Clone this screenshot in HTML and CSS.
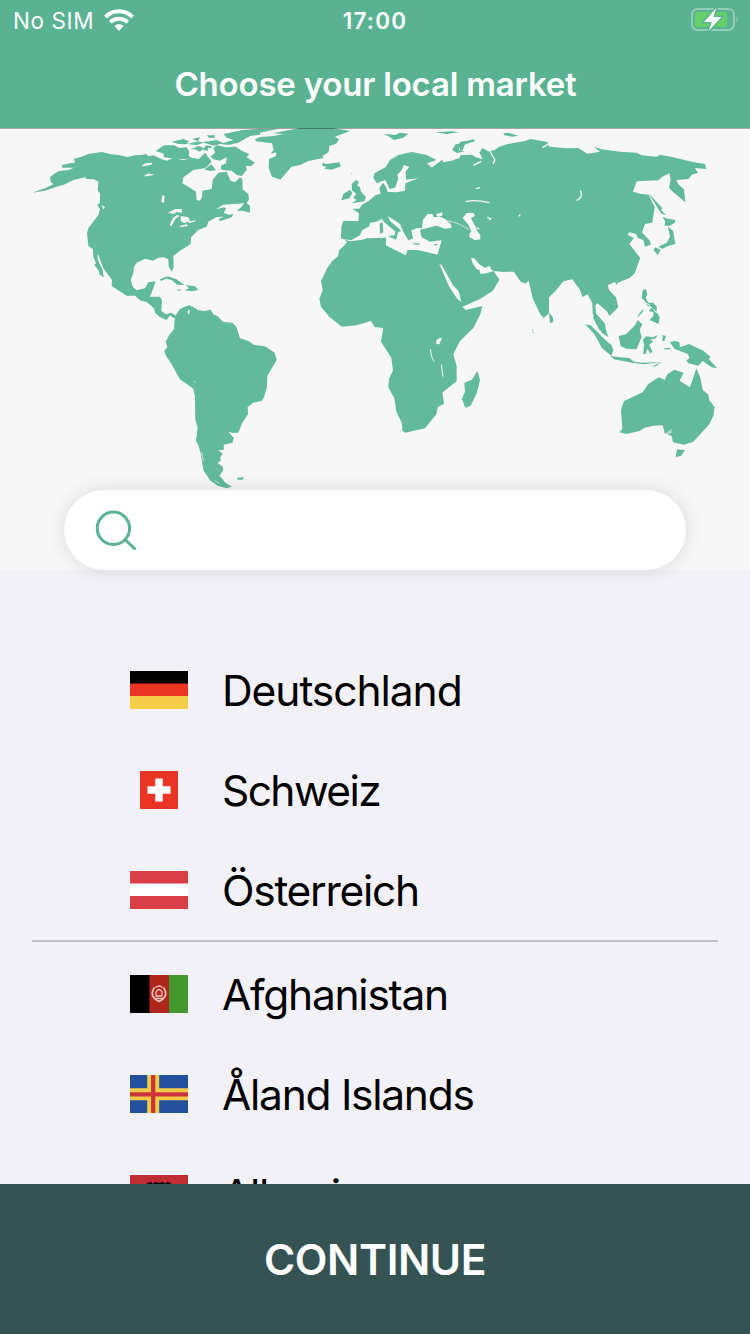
FILE: index.html
```html
<!DOCTYPE html>
<html lang="en">
<head>
<meta charset="utf-8">
<title>Choose your local market</title>
<link rel="stylesheet" href="styles.css">
</head>
<body>
<div class="screen">
  <header class="header">
    <div class="status">
      <div class="carrier"><span>No SIM</span>
        <svg class="wifi" viewBox="0 0 30 22" fill="none" stroke="#fff"><path stroke-width="4" d="M1.500 8.100C9 .4 21 .4 28.500 8.100"/><path stroke-width="4" d="M6.300 13.200C11 8.500 19 8.500 23.700 13.200"/><path fill="#fff" stroke="none" d="M10.300 17C12.800 14.600 17.200 14.600 19.700 17L15 22Z"/></svg>
      </div>
      <time class="clock">17:00</time>
      <svg class="battery" viewBox="0 0 50 26"><rect x="2" y="2" width="42" height="21" rx="5.500" fill="none" stroke="#94cdb7" stroke-width="2"/><rect x="5" y="5" width="32" height="15" rx="2.500" fill="#65d067"/><path d="M46.500 9q2.500 3.500 0 7z" fill="#94cdb7"/><path d="M26.200 1L14 15h7.800l-3 8.800L31.500 10h-8z" fill="#fff" stroke="#59b292" stroke-width="3" paint-order="stroke"/></svg>
    </div>
    <h1 class="title">Choose your local market</h1>
  </header>

  <section class="hero">
    <svg class="map" viewBox="0 128 750 442" fill="#62ba9d">
      <!-- North America -->
      <g transform="translate(20 120) scale(.33333)">
        <path d="M37 218L75 205L100 193L92 185L90 172L105 160L118 153L145 150L162 143L128 143L124 136L150 130L165 128L162 116L185 110L205 102L245 96L270 102L300 106L322 111L345 106L365 105L378 102L385 109L400 106L425 118L440 122L460 114L490 120L520 114L537 117L555 98L575 125L560 140L553 145L520 150L490 172L487 190L505 200L528 215L530 240L540 242L546 232L547 212L575 207L578 180L595 158L620 155L632 183L645 187L660 172L667 178L668 208L685 222L687 238L680 250L690 258L690 278L668 272L650 272L665 260L672 250L640 252L610 254L588 268L612 262L618 265L612 278L625 284L640 282L635 292L600 304L597 296L612 290L590 291L565 305L560 320L535 330L513 352L512 372L480 392L460 408L461 440L456 455L446 440L445 418L430 412L415 413L400 422L375 416L350 428L342 440L340 460L332 480L338 500L350 511L375 505L385 487L407 484L400 505L390 530L420 530L426 540L424 573L438 583L452 578L466 585L460 594L450 586L440 600L420 592L405 578L402 565L380 546L362 542L345 527L320 527L275 498L276 480L250 445L235 405L232 403L234 420L248 450L251 472L240 465L235 450L223 435L228 430L220 410L219 388L205 377L201 340L205 325L235 285L240 268L232 255L240 248L240 220L233 212L235 185L222 178L200 177L195 172L160 180L130 195L110 200L75 212Z"/>
        <path d="M407 93L432 76L463 76L478 84L500 82L508 95L506 108L520 116L490 117L460 116L430 111L432 101ZM455 65L490 57L507 64L500 73L475 72ZM517 57L540 51L533 64ZM561 46L586 46L582 54L566 53ZM502 72L535 64L550 68L530 76ZM546 67L590 60L610 69L582 77ZM611 42L650 34L720 27V44L690 48L655 68L625 75L600 72L640 60L618 52ZM512 88L535 78L552 84L540 95L525 88ZM558 76L575 79L568 105L580 118L600 122L620 112L618 130L600 138L606 150L635 152L650 165L665 168L680 150L678 137L692 139L705 128L680 112L688 102L665 92L648 80L620 82L590 76L570 94L548 90ZM553 148L574 133L588 151L570 153ZM420 478L443 469L470 478L493 495L472 494L455 480L438 476L423 483ZM498 495L525 499L535 509L518 514L493 511L507 505ZM470 508L484 509L478 514ZM478 570L490 562L510 555L516 562L530 566V570Z"/>
        <path fill="#f7f7f7" d="M365 137L378 129L398 128L394 134L370 139ZM370 169L385 160L404 164L380 169ZM427 225L434 228L432 248L424 246ZM444 278L466 267L485 267L487 278L470 276L460 282ZM455 318L449 316L458 295L470 286L480 287L466 296ZM482 288L505 292L510 302L492 310L482 302ZM477 319L500 313L505 318L483 321ZM502 305L528 301L524 305L508 309ZM565 83L582 88L585 98L568 113L562 98ZM588 127L606 126L602 145L584 141ZM244 254L255 262L250 268Z"/>
      </g>
      <!-- South America -->
      <g transform="translate(140 270) scale(.33333)">
        <path d="M75 140L92 128L106 137L120 117L142 110L150 105L146 117L157 109L170 119L193 123L212 119L220 133L233 139L250 156L277 158L289 170L300 205L325 213L343 225L375 229L404 248L410 269L400 287L382 317L381 350L372 382L365 393L340 398L323 411L324 433L307 458L295 488L278 489L265 485L281 503L278 518L251 524L252 539L235 541L248 552L241 562L242 572L233 579L248 590L250 599L239 617L256 638L276 650L260 655L233 647L210 631L190 600L183 555L175 525L168 512L173 472L166 450L165 380L160 356L120 328L92 278L77 256L73 242L82 232L77 215L88 194L102 178L104 145L92 133L80 141ZM291 623L312 622L308 629L294 629Z"/>
        <path fill="#f7f7f7" d="M144 121h5l-1 12-5-4zM163 331l5 7-4-1z"/>
        <path fill="none" stroke="#f7f7f7" stroke-width="2" d="M185 545l5 28M225 632l13 8"/>
      </g>
      <!-- Greenland, Iceland and Europe -->
      <g transform="translate(240 120) scale(.33333)">
        <path d="M45 58L60 51L100 48L130 42L98 40L180 24H280L330 33L285 50L297 58L288 71L268 78L266 97L247 108L250 114L205 123L180 135L155 140L135 163L121 179L96 170L86 145L87 117L108 108L109 97L92 101L101 89L96 70L48 64ZM0 31L58 26H118L55 39L0 55ZM247 128L258 132L298 127L303 139L275 149L252 146L260 140L247 138ZM431 41L465 45L480 38L505 41L490 53L462 60L448 50ZM585 37L635 34L657 37L620 42ZM637 91L645 74L700 58L705 64L662 77L656 91L675 94L652 99ZM334 158L337 159L336 164ZM335 192L348 180L356 184L352 198L360 201L363 215L378 231L373 244L334 250L350 240L340 233L349 222L336 211ZM310 222L330 209L337 219L328 235L304 241Z"/>
        <path fill-rule="evenodd" d="M303 355L304 320L310 302L355 304L357 280L337 266L358 266L366 254L386 243L407 225L422 221L418 204L430 188L438 200L443 216L470 217L495 212L496 190L535 175L498 179L497 154L508 141L492 135L485 151L472 164L475 177L465 203L449 207L436 180L410 190L400 173L404 159L437 142L450 120L475 105L515 96L560 105L590 120L570 127L561 130L575 143L607 119L610 127L635 122L680 106L720 115V450H259L276 424L294 409L298 389L323 371L315 358L333 361L360 346L366 331L388 319L390 308L410 305L425 297L433 307L467 335L463 346L443 348L468 359L474 338L483 331L450 303L444 288L480 312L490 335L505 361L519 355L514 331L532 324L556 325L540 330L545 352L570 365L605 361L595 405L575 400L533 390L504 390L498 408L470 398L437 376L438 353L380 355L345 370L320 361Z"/>
        <path d="M419 310l9-3 2 30-10 5zM518 369l20 1 1 4-18-1zM581 373l14-2-9 7z"/>
      </g>
      <!-- Africa and Arabia -->
      <g transform="translate(310 230) scale(.33333)">
        <path d="M112 36L125 33L170 28L228 23L226 46L288 76L293 59L382 75L395 32H630V140L611 124L580 126L551 123L568 149L549 182L510 207L468 226L457 230L467 240L517 228L511 253L490 294L450 333L430 372L440 408L440 453L397 488L402 521L383 532L379 553L345 595L286 608L277 602L276 580L259 545L253 505L235 472L237 446L249 421L244 383L213 335L220 294L194 291L183 273L140 286L95 290L58 260L33 230L28 207L38 180L33 153L55 109L86 87L90 61ZM502 422L510 451L500 490L482 527L466 533L456 507L465 485L463 459L487 448Z"/>
        <path fill="#f7f7f7" d="M388 102L395 105L430 167L446 184L454 216L442 207L418 171ZM380 330L390 323L396 325L388 343L378 342Z"/>
        <path fill="none" stroke="#f7f7f7" stroke-width="3" d="M361 357Q362 380 372 394M394 404L399 440"/>
      </g>
      <!-- Asia -->
      <g transform="translate(460 120) scale(.33333)">
        <path d="M0 106L35 104L58 118L68 116L58 98L67 84L85 94L105 90L115 82L140 73L195 63L212 57L262 66L268 80L320 85L355 84L382 101L420 95L402 80L425 88L480 95L530 98L545 106L590 110L600 104L640 112L695 125L735 132L739 147L705 144L714 158L695 164L686 177L649 180L655 193L672 208L676 247L635 212L627 203L632 178L628 160L607 170L595 181L530 184L519 215L545 222L566 224L584 262L577 308L555 312L546 337L570 363L572 374L555 380L550 360L534 354L528 342L508 337L495 352L483 345L503 328L500 342L521 354L508 372L541 414L524 460L510 473L474 488L470 495L464 485L443 496L447 510L468 532L475 562L448 588L442 575L413 550L406 555L408 580L435 611L437 630H418L398 580L397 550L383 523L367 531L360 509L337 478L310 484L289 510L267 532L267 580L251 594L240 581L218 535L206 482L196 491L182 485L162 455L95 451L0 440Z"/>
        <path d="M0 65L45 59L40 63L15 72L8 91L0 92ZM130 40L145 38L175 47L157 50L133 46ZM566 221L581 236L607 264L603 269L618 286L603 280ZM608 290L623 296L645 300L645 308L629 317L613 317L616 305ZM624 320L639 332L646 372L624 378L608 386L595 380L620 368L630 350ZM585 382L602 389L593 406L581 390ZM267 578L278 590L280 606L270 610ZM217 626l3 4h-3z"/>
        <g fill="none" stroke="#f7f7f7" stroke-width="4"><path d="M84 84L105 120L99 131M361 212Q371 231 350 242M17 245Q43 238 88 248M40 136L64 124M82 292L92 296L88 300M48 206l12-3M247 83l20-12M50 323l8 4M176 289l5-6"/></g>
      </g>
      <!-- Inland seas and gulfs -->
      <g fill="#f7f7f7">
        <path transform="translate(460 120) scale(.33333)" d="M8 294L20 279L40 278L45 288L33 294L40 308L47 321L53 335L61 345V358L45 361L29 352L28 342L34 334L26 316Z"/>
        <path transform="translate(310 230) scale(.33333)" d="M483 85L492 84L508 103L525 113L540 108L543 118L551 123L530 130L512 132L508 120L500 118L488 100Z"/>
        <path transform="translate(240 120) scale(.33333)" d="M546 322L549 300L562 283L577 281L582 292L600 290L616 297L632 311L635 323L615 326L590 317L565 323L550 327ZM588 282L608 277L606 287L593 290Z"/>
        <path transform="translate(240 120) scale(.33333)" fill="none" stroke="#f7f7f7" stroke-width="2" d="M625 302L655 311L688 329"/>
      </g>
      <!-- South-east Asia and Oceania -->
      <g transform="translate(520 270) scale(.33333)">
        <path d="M196 163L212 166L240 194L267 220L274 224L280 240L274 258L245 233L225 195ZM218 140L230 138L252 160L265 202L247 190L230 165ZM271 258L300 262L328 264L342 275L368 278L424 276L400 280L370 283L340 279L282 268ZM395 290L424 276L408 289ZM296 198L318 193L346 164L352 150L367 163L359 180L365 200L350 238L320 236L302 229ZM368 60L378 57L382 73L377 84L385 98L400 98L411 111L409 124L419 141L416 162L389 150L400 138L400 126L386 123L397 112L382 107L375 93L365 84ZM353 137L369 117L368 127L354 141ZM378 199L398 202L412 196L409 203L388 211L401 213L388 224L397 244L392 252L382 236L376 253L370 252L372 224L369 210ZM428 195L438 198L433 214L427 212ZM431 235L450 233L449 238L432 238ZM449 216L466 213L478 217L480 232L507 222L550 242L572 261L566 267L592 295L575 292L548 273L535 287L505 280L499 272L508 264L504 252L464 237ZM298 487L307 476L303 419L312 393L344 378L368 367L385 342L416 322L434 329L443 312L463 299L491 308L479 332L510 352L522 317L529 295L541 323L548 359L565 374L568 391L584 412L580 437L568 462L542 491L520 515L492 524L459 517L455 498L434 490L428 466L400 467L374 473L358 483L320 492ZM471 538L495 541L483 558L467 561ZM36 177l6 12-3-1z"/>
        <path fill="none" stroke="#f7f7f7" stroke-width="3" d="M377 99l14 7M400 117l10 12M437 493l17-14M445 492l10-7"/>
      </g>
    </svg>
    <label class="search">
      <svg class="lens" viewBox="0 0 42 42" fill="none" stroke="#59b292" stroke-width="3"><circle cx="18.400" cy="18.300" r="16.200"/><path d="M30 29.500L40.500 39.500"/></svg>
      <input class="query" type="text" aria-label="Search">
    </label>
  </section>

  <main class="markets">
    <div class="group">
      <div class="row"><svg class="flag" viewBox="0 0 58 38"><path d="M0 0h58v13H0z"/><path fill="#ea3424" d="M0 12.500h58V25H0z"/><path fill="#f6cd46" d="M0 25h58v13H0z"/></svg><span class="name">Deutschland</span></div>
      <div class="row"><svg class="flag" viewBox="0 0 58 38"><path fill="#ea3424" d="M10 0h38v38H10z"/><path fill="#fff" d="M25.300 7.500h7.400v7.800h7.800v7.400h-7.800v7.800h-7.400v-7.800h-7.800v-7.400h7.800z"/></svg><span class="name name-tight">Schweiz</span></div>
      <div class="row"><svg class="flag" viewBox="0 0 58 38"><path fill="#d93f44" d="M0 0h58v38H0z"/><path fill="#fff" d="M0 12.500h58V25H0z"/></svg><span class="name name-snug">Österreich</span></div>
    </div>
    <div class="group">
      <div class="row"><svg class="flag" viewBox="0 0 58 38"><path d="M0 0h20v38H0z"/><path fill="#b1261c" d="M19.500 0H39v38H19.500z"/><path fill="#43972d" d="M39 0h19v38H39z"/><g fill="none" stroke="#e9c5bf"><path stroke-width="1.700" d="M24.500 12.500q-6 9 4.500 14 10.500-5 4.500-14"/><path stroke-width="1.300" d="M25.500 12.500q3.500-3 7 0M26 21h6v-4q-3-5-6 0zM25 23.500h8"/></g></svg><span class="name name-snug">Afghanistan</span></div>
      <div class="row"><svg class="flag" viewBox="0 0 58 38"><path fill="#22509d" d="M0 0h58v38H0z"/><path stroke="#f4cc48" stroke-width="12" d="M23.200 0v38M0 19.300h58"/><path stroke="#cb3439" stroke-width="4.200" d="M23.200 0v38M0 19.300h58"/></svg><span class="name name-snug">Åland Islands</span></div>
      <div class="row"><svg class="flag" viewBox="0 0 58 38"><path fill="#c02d32" d="M0 0h58v38H0z"/><path d="M17 8l4-1 2 2 2-2 4 1 4-1 2 2 2-2 4 1-5 7 2 5-6 8-3 6-3-6-6-8 2-5z"/></svg><span class="name name-snug">Albania</span></div>
    </div>
  </main>

  <button class="continue" type="button"><span>CONTINUE</span></button>
</div>
</body>
</html>
```
FILE: styles.css
```css
* { box-sizing: border-box; }
body { margin: 0; font-family: Inter, "Liberation Sans", sans-serif; }
.screen { width: 750px; height: 1334px; display: flex; flex-direction: column; overflow: hidden; background: #f2f1f7; }
.header { position: relative; z-index: 1; height: 128px; flex: none; background: #59b292; color: #fff; box-shadow: 0 1px 0 rgba(0, 0, 0, .33); }
.status { height: 40px; display: grid; grid-template-columns: 1fr auto 1fr; align-items: center; padding: 0 10px 0 13px; }
.carrier { display: flex; align-items: center; gap: 10px; font-size: 22.500px; letter-spacing: .6px; }
.wifi { width: 30px; height: 22px; }
.clock { font-size: 22.500px; font-weight: 600; letter-spacing: 1.200px; margin-right: 3px; }
.battery { width: 50px; height: 26px; justify-self: end; }
.title { margin: 0; height: 88px; padding-left: 1px; display: flex; align-items: center; justify-content: center; font-size: 33px; font-weight: 600; letter-spacing: -.2px; white-space: nowrap; }
.hero { height: 442px; flex: none; display: grid; grid-template-rows: 362px 80px; background: #f7f7f7; }
.map { width: 750px; height: 442px; grid-area: 1 / 1 / 3 / 2; }
.search { grid-area: 2 / 1; position: relative; width: 622px; margin: 0 auto; border-radius: 40px; background: #fff; box-shadow: 0 0 20px rgba(0, 0, 0, .12); display: flex; align-items: center; padding: 1px 0 0 31px; gap: 20px; }
.lens { width: 42px; height: 42px; }
.query { flex: 1; margin-right: 40px; min-width: 0; border: 0; outline: 0; background: transparent; font: 32px Inter, sans-serif; }
.markets { height: 614px; flex: none; overflow: hidden; padding: 70px 32px 0; }
.group + .group { border-top: 2px solid #bfbec4; padding-top: 2px; }
.row { height: 100px; display: flex; align-items: center; gap: 34px; padding-left: 98px; }
.flag { width: 58px; height: 38px; }
.name { font-size: 42.500px; white-space: nowrap; letter-spacing: -1.050px; }
.name-snug { letter-spacing: -1.270px; }
.name-tight { letter-spacing: -1.600px; }
.continue { height: 150px; flex: none; border: 0; padding: 0; background: #355352; color: #fff; font: 600 42.500px Inter, "Liberation Sans", sans-serif; letter-spacing: -.4px; }
```
